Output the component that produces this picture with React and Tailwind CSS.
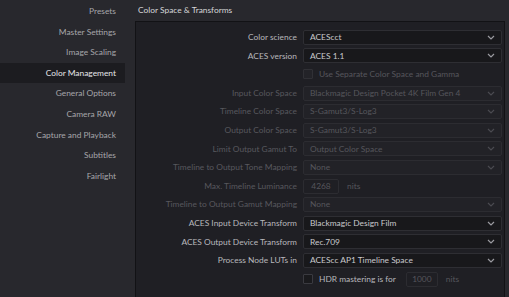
import React from 'react';

const sidebar = [
  'Presets',
  'Master Settings',
  'Image Scaling',
  'Color Management',
  'General Options',
  'Camera RAW',
  'Capture and Playback',
  'Subtitles',
  'Fairlight',
];

function Chevron({ dim }) {
  return (
    <svg width="8" height="5" viewBox="0 0 8 5" className="ml-auto mr-[6px] shrink-0">
      <path d="M1 1 L4 4 L7 1" fill="none" stroke={dim ? '#4a4a50' : '#9a9aa0'} strokeWidth="1.2" />
    </svg>
  );
}

function Select({ value, dim }) {
  return (
    <div
      className={`flex items-center h-[15px] w-[199px] rounded-[2px] border pl-[6px] ${
        dim ? 'border-[#2c2c31] bg-[#222227] text-[#56565c]' : 'border-[#2e2e33] bg-[#18181b] text-[#c9c9cc]'
      }`}
    >
      <span className="whitespace-nowrap">{value}</span>
      <Chevron dim={dim} />
    </div>
  );
}

function Row({ label, dim, children }) {
  return (
    <div className="flex items-center h-[18.6px]">
      <div className={`w-[167px] pr-[6px] text-right whitespace-nowrap ${dim ? 'text-[#58585e]' : 'text-[#b8b8bc]'}`}>{label}</div>
      {children}
    </div>
  );
}

function Check({ label, dim, children }) {
  return (
    <div className="flex items-center h-[18.6px] pl-[167px]">
      <div className={`w-[10px] h-[10px] border rounded-[1px] ${dim ? 'border-[#303035] bg-[#232328]' : 'border-[#3a3a40] bg-[#1a1a1d]'}`} />
      <span className={`ml-[6px] whitespace-nowrap ${dim ? 'text-[#56565c]' : 'text-[#b8b8bc]'}`}>{label}</span>
      {children}
    </div>
  );
}

export default function App() {
  return (
    <div
      className="w-[509px] h-[297px] flex bg-[#28282d] text-[8.4px] leading-none overflow-hidden"
      style={{ fontFamily: 'Lato, "Open Sans", sans-serif' }}
    >
      {/* Sidebar */}
      <div className="w-[125px] pt-[1px] flex flex-col">
        {sidebar.map((item) => (
          <div
            key={item}
            className={`h-[20.6px] flex items-center justify-end pr-[9px] ${
              item === 'Color Management' ? 'bg-[#1c1c20] text-[#e6e6e8]' : 'text-[#a6a6aa]'
            }`}
          >
            {item}
          </div>
        ))}
      </div>

      {/* Content */}
      <div className="ml-[10px] w-[370px] flex flex-col">
        <div className="h-[21px] flex items-center pl-[3px] text-[#d6d6d8]">Color Space &amp; Transforms</div>
        <div className="flex-1 bg-[#1f1f24] border-l border-t border-r border-[#121215] pt-[6px]">
          <Row label="Color science"><Select value="ACEScct" /></Row>
          <Row label="ACES version"><Select value="ACES 1.1" /></Row>
          <Check label="Use Separate Color Space and Gamma" dim />
          <Row label="Input Color Space" dim><Select value="Blackmagic Design Pocket 4K Film Gen 4" dim /></Row>
          <Row label="Timeline Color Space" dim><Select value="S-Gamut3/S-Log3" dim /></Row>
          <Row label="Output Color Space" dim><Select value="S-Gamut3/S-Log3" dim /></Row>
          <Row label="Limit Output Gamut To" dim><Select value="Output Color Space" dim /></Row>
          <Row label="Timeline to Output Tone Mapping" dim><Select value="None" dim /></Row>
          <Row label="Max. Timeline Luminance" dim>
            <div className="h-[15px] w-[36px] border border-[#2c2c31] rounded-[2px] flex items-center justify-center text-[#56565c]">4268</div>
            <span className="ml-[8px] text-[#56565c]">nits</span>
          </Row>
          <Row label="Timeline to Output Gamut Mapping" dim><Select value="None" dim /></Row>
          <Row label="ACES Input Device Transform"><Select value="Blackmagic Design Film" /></Row>
          <Row label="ACES Output Device Transform"><Select value="Rec.709" /></Row>
          <Row label="Process Node LUTs in"><Select value="ACEScc AP1 Timeline Space" /></Row>
          <Check label="HDR mastering is for">
            <div className="ml-[10px] h-[15px] w-[32px] border border-[#2c2c31] rounded-[2px] flex items-center justify-center text-[#56565c]">1000</div>
            <span className="ml-[8px] text-[#56565c]">nits</span>
          </Check>
        </div>
      </div>
    </div>
  );
}
